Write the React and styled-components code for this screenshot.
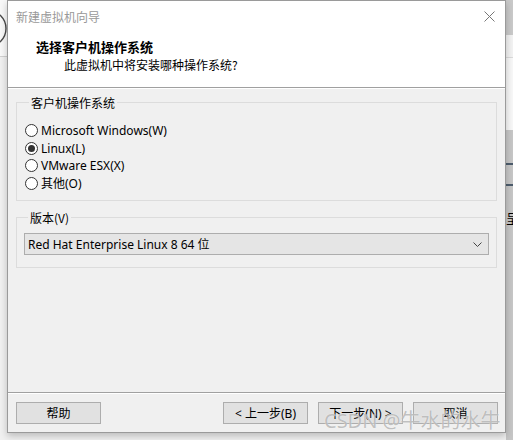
import styled, { createGlobalStyle } from "styled-components";

const GlobalStyle = createGlobalStyle`
  html, body {
    margin: 0;
    padding: 0;
  }
  body {
    width: 513px;
    height: 440px;
    overflow: hidden;
    background: #f0f0f0;
    font-family: "Noto Sans", "Noto Sans CJK SC", sans-serif;
    font-size: 12px;
    color: #000;
  }
`;

const Page = styled.div`
  position: relative;
  display: flex;
  width: 513px;
  height: 440px;
  overflow: hidden;
`;

// what shows of the window behind the dialog
const Strip = styled.div`
  width: 7px;
  flex-shrink: 0;
  display: flex;
  flex-direction: column;
  overflow: hidden;
`;

const StripPart = styled.div`
  height: ${(p) => (p.$h ? `${p.$h}px` : "auto")};
  flex: ${(p) => (p.$h ? "none" : "1")};
  background: ${(p) => p.$bg};
  border-bottom: ${(p) => (p.$line ? `${p.$line}` : "none")};
  overflow: hidden;
  font-family: "Noto Sans CJK SC", sans-serif;
  font-size: 13px;
  line-height: 16px;
`;

const Dialog = styled.div`
  width: 499px;
  height: 433px;
  box-sizing: border-box;
  flex-shrink: 0;
  border: 1px solid #9a9a9a;
  background: #f0f0f0;
  display: flex;
  flex-direction: column;
  box-shadow: 0 3px 7px rgba(0, 0, 0, 0.22);
  z-index: 1;
`;

const TitleBar = styled.div`
  height: 30px;
  flex: none;
  display: flex;
  align-items: center;
  justify-content: space-between;
  padding: 0 10px 0 8px;
  background: #fff;
  color: #999;
  font-family: "Noto Sans CJK SC", sans-serif;
  font-size: 12px;
`;

const Header = styled.div`
  height: 57px;
  flex: none;
  box-sizing: border-box;
  padding: 7px 0 0 28px;
  background: #fff;
  border-bottom: 1px solid #a0a0a0;
`;

const Title = styled.div`
  font-family: "Noto Sans CJK SC", sans-serif;
  font-weight: 700;
  font-size: 13px;
  line-height: 17px;
`;

const Subtitle = styled.div`
  margin: 1px 0 0 28px;
  font-family: "Noto Sans CJK SC", sans-serif;
  font-size: 12px;
  line-height: 17px;
`;

const Body = styled.div`
  flex: 1;
  display: flex;
  flex-direction: column;
  gap: 8px;
  padding: 5px 8px 0;
  border-top: 1px solid #fff;
`;

const Group = styled.fieldset`
  margin: 0;
  padding: ${(p) => p.$pad};
  border: 1px solid #dcdcdc;
  display: flex;
  flex-direction: column;
`;

const Legend = styled.legend`
  margin-left: 4px;
  padding: 0 2px;
  font-family: "Noto Sans CJK SC", sans-serif;
  font-size: 12px;
  line-height: 17px;
`;

const RadioRow = styled.label`
  display: flex;
  align-items: center;
  gap: 3px;
  height: 17.5px;
`;

const Radio = styled.input.attrs({ type: "radio" })`
  appearance: none;
  margin: 0;
  width: 13px;
  height: 13px;
  box-sizing: border-box;
  border: 1px solid #333;
  border-radius: 50%;
  background: #fff;
  display: grid;
  place-items: center;

  &:checked::after {
    content: "";
    width: 7px;
    height: 7px;
    border-radius: 50%;
    background: #333;
  }
`;

const SelectBox = styled.div`
  height: 22px;
  box-sizing: border-box;
  border: 1px solid #adadad;
  background: #e5e5e5;
  display: flex;
  align-items: center;
  justify-content: space-between;
  padding: 0 6px 0 3px;
`;

const Separator = styled.div`
  height: 1px;
  flex: none;
  background: #a0a0a0;
  border-bottom: 1px solid #fff;
`;

const Footer = styled.div`
  flex: none;
  display: flex;
  align-items: center;
  gap: 10px;
  padding: 8px 7px 8px 8px;
`;

const Button = styled.button`
  width: 85px;
  height: 22px;
  box-sizing: border-box;
  margin: 0;
  margin-left: ${(p) => (p.$push ? "auto" : "0")};
  border: 1px solid #adadad;
  background: #e1e1e1;
  font-family: "Noto Sans", "Noto Sans CJK SC", sans-serif;
  font-size: 12px;
  color: #000;
  padding: 0;
`;

const Watermark = styled.div`
  position: absolute;
  left: 324px;
  top: 407px;
  z-index: 2;
  font-family: "Noto Sans", "Noto Sans CJK SC", sans-serif;
  font-size: 20px;
  line-height: 28px;
  color: rgba(140, 140, 140, 0.55);
  text-shadow: 0 0 1px rgba(255, 255, 255, 0.9);
  white-space: nowrap;
  pointer-events: none;
`;

const options = [
  { label: "Microsoft Windows(W)" },
  { label: "Linux(L)", checked: true },
  { label: "VMware ESX(X)" },
  { label: "其他(O)" },
];

export default function App() {
  return (
    <>
      <GlobalStyle />
      <Page>
        <Strip>
          <StripPart $h={56} $bg="#f8f8f8">
            <svg width="7" height="56">
              <circle cx="-12" cy="28.5" r="18" fill="none" stroke="#4a4a4a" strokeWidth="1.4" />
            </svg>
          </StripPart>
          <StripPart $h={1} $bg="#d0d0d0" />
          <StripPart $bg="#f0f0f0" />
        </Strip>

        <Dialog>
          <TitleBar>
            <span>新建虚拟机向导</span>
            <svg width="11" height="11" viewBox="0 0 11 11">
              <path d="M0.5 0.5L10.5 10.5M10.5 0.5L0.5 10.5" stroke="#777" strokeWidth="1" />
            </svg>
          </TitleBar>
          <Header>
            <Title>选择客户机操作系统</Title>
            <Subtitle>此虚拟机中将安装哪种操作系统?</Subtitle>
          </Header>
          <Body>
            <Group $pad="11px 8px 8px">
              <Legend>客户机操作系统</Legend>
              {options.map((o) => (
                <RadioRow key={o.label}>
                  <Radio name="os" defaultChecked={o.checked} />
                  {o.label}
                </RadioRow>
              ))}
            </Group>
            <Group $pad="7px 7px 12px">
              <Legend>版本(V)</Legend>
              <SelectBox>
                <span>Red Hat Enterprise Linux 8 64 位</span>
                <svg width="9" height="5" viewBox="0 0 9 5">
                  <path d="M0.5 0.5L4.5 4.5L8.5 0.5" fill="none" stroke="#444" strokeWidth="1" />
                </svg>
              </SelectBox>
            </Group>
          </Body>
          <Separator />
          <Footer>
            <Button>帮助</Button>
            <Button $push>&lt; 上一步(B)</Button>
            <Button>下一步(N) &gt;</Button>
            <Button>取消</Button>
          </Footer>
        </Dialog>

        <Strip>
          <StripPart $h={35} $bg="#c9c9c9" />
          <StripPart $h={22} $bg="#f2f2f2" $line="1px solid #dadada" />
          <StripPart $h={72} $bg="#f7f7f7" />
          <StripPart $h={33} $bg="#c6c6c6" $line="2px solid #4c5c6c" />
          <StripPart $h={19} $bg="#c6c6c6" $line="2px solid #4c5c6c" />
          <StripPart $bg="#c6c6c6">
            <div style={{ marginTop: 24 }}>呈</div>
          </StripPart>
        </Strip>

        <Watermark>CSDN @牛水的水牛</Watermark>
      </Page>
    </>
  );
}
